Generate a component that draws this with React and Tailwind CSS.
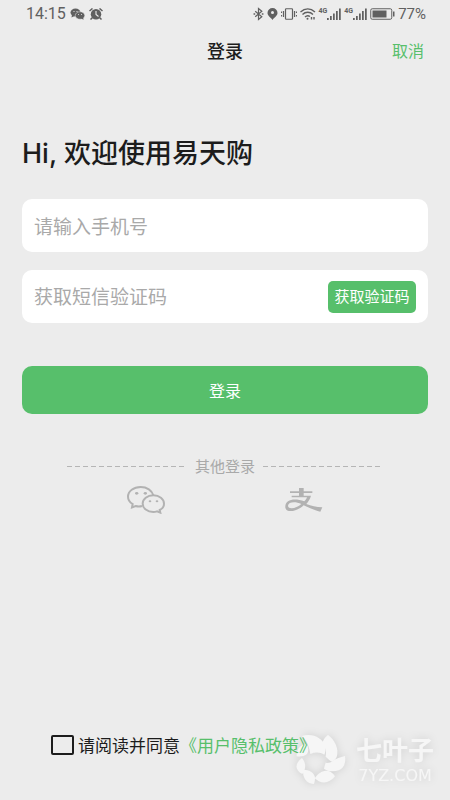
import React, { useState } from 'react';

const WechatSolid = () => (
  <svg className="h-3 w-[15px]" viewBox="0 0 30 24" aria-hidden="true">
    <g fill="#606060">
      <ellipse cx="11" cy="9" rx="10" ry="8" />
      <path d="M4 13l-1 6 6-3z" />
      <ellipse cx="20" cy="15" rx="9.5" ry="7.5" stroke="#ececec" strokeWidth="1" />
      <path d="M22 20l5 4-1-6z" />
    </g>
    <g fill="#ececec">
      <circle cx="8" cy="7" r="1.2" />
      <circle cx="14" cy="7" r="1.2" />
      <circle cx="17" cy="13" r="1" />
      <circle cx="23" cy="13" r="1" />
    </g>
  </svg>
);

const AlarmIcon = () => (
  <svg className="h-3 w-3.5" viewBox="0 0 28 24" fill="none" aria-hidden="true">
    <circle cx="14" cy="12.5" r="10.5" fill="#606060" />
    <path d="M1 6l6-5M27 6l-6-5M7 19l-4 4M21 19l4 4" stroke="#606060" strokeWidth="3" />
    <path d="M14 6v7l5 4" stroke="#ececec" strokeWidth="2.2" />
  </svg>
);

const BluetoothIcon = () => (
  <svg className="h-3.5 w-[11px]" viewBox="0 0 20 24" fill="none" stroke="#606060" strokeWidth="2.2" aria-hidden="true">
    <path d="M4 7l12 10-6 5V2l6 5L4 17" />
    <path d="M1 12h3M16 12h3" strokeWidth="2.5" />
  </svg>
);

const PinIcon = () => (
  <svg className="h-3 w-[11px]" viewBox="0 0 20 24" aria-hidden="true">
    <path d="M10 0a10 10 0 0 0-10 10c0 6 7 9 10 14 3-5 10-8 10-14A10 10 0 0 0 10 0z" fill="#606060" />
    <circle cx="10" cy="9" r="3" fill="#ececec" />
  </svg>
);

const VibrateIcon = () => (
  <svg className="h-3 w-4" viewBox="0 0 32 24" fill="none" stroke="#606060" strokeWidth="2.4" aria-hidden="true">
    <rect x="9" y="1.5" width="14" height="21" rx="1.5" />
    <path d="M5 6v12M27 6v12" />
    <path d="M1 7v3M1 14v3M31 7v3M31 14v3" />
  </svg>
);

const WifiIcon = () => (
  <svg className="h-3 w-4" viewBox="0 0 32 24" fill="none" stroke="#606060" strokeWidth="2.8" aria-hidden="true">
    <path d="M1 8c9-8 20-8 29 0M5 13c6-6 15-6 21 0M10 18c3-3 7-3 10-1" />
    <circle cx="15" cy="21.5" r="2" fill="#606060" stroke="none" />
    <path d="M23 18v5M28 18v5" />
  </svg>
);

const SignalIcon = () => (
  <div className="flex items-center">
    <span className="self-start text-[7px] leading-[7px] font-bold">4G</span>
    <svg className="h-3 w-3.5" viewBox="0 0 28 24" fill="#606060" aria-hidden="true">
      <rect x="0" y="20" width="3.5" height="4" />
      <rect x="6" y="16" width="3.5" height="8" />
      <rect x="12" y="11" width="3.5" height="13" />
      <rect x="18" y="6" width="3.5" height="18" />
      <rect x="24" y="1" width="3.5" height="23" />
    </svg>
  </div>
);

const BatteryIcon = () => (
  <svg className="h-3 w-[25px]" viewBox="0 0 50 24" aria-hidden="true">
    <rect x="1.5" y="1.5" width="42" height="21" rx="3" fill="none" stroke="#606060" strokeWidth="2" />
    <rect x="5" y="5" width="28" height="14" fill="#606060" />
    <rect x="46" y="7" width="3" height="10" fill="#606060" />
  </svg>
);

const StatusBar = () => (
  <div className="flex h-7 items-center justify-between pr-6 pl-[26px] font-['Roboto',sans-serif] text-base leading-none text-[#606060]">
    <div className="flex items-center gap-1">
      <span>14:15</span>
      <WechatSolid />
      <AlarmIcon />
    </div>
    <div className="flex items-center gap-[3px]">
      <BluetoothIcon />
      <PinIcon />
      <VibrateIcon />
      <WifiIcon />
      <SignalIcon />
      <SignalIcon />
      <BatteryIcon />
      <span className="text-[15px]">77%</span>
    </div>
  </div>
);

const WechatIcon = () => (
  <svg className="h-7 w-[38px]" viewBox="0 0 114 84" fill="none" stroke="#b2b2b2" strokeWidth="6" aria-hidden="true">
    <path d="M45 60c-6 2-13 2-19 0l-11 4 2-10C7 48 3 40 3 32 3 15 20 3 41 3c19 0 34 10 38 25" />
    <path d="M98 72c8-4 13-11 13-19 0-14-14-25-32-25S47 39 47 53s14 25 32 25c4 0 8-1 11-2l10 4z" />
    <g fill="#b2b2b2" stroke="none">
      <ellipse cx="29" cy="22" rx="5" ry="4" />
      <ellipse cx="55" cy="22" rx="5" ry="4" />
      <ellipse cx="69" cy="46" rx="4" ry="3" />
      <ellipse cx="90" cy="46" rx="4" ry="3" />
    </g>
  </svg>
);

const AlipayIcon = () => (
  <svg className="h-6 w-[38px]" viewBox="0 0 114 72" aria-hidden="true">
    <path d="M42 0h14v10h26v5H56v8h22c-3 10-8 18-14 25 14 5 30 9 48 10l-6 13c-18-4-34-12-50-19-16 16-51 26-55 7C-1 34 28 29 58 40c4-4 7-8 8-12H20v-5h22v-8H15v-5h27zM49 48C32 40 10 41 9 53c0 12 26 9 40-5z" fill="#b2b2b2" />
  </svg>
);

const Watermark = () => (
  <div className="pointer-events-none absolute right-4 bottom-3 flex items-center gap-2 text-[#f6f6f6] drop-shadow-[0_0_4px_rgba(0,0,0,0.12)]">
    <svg className="h-[54px] w-[54px]" viewBox="0 0 162 162" fill="currentColor" aria-hidden="true">
      <path d="M24 6c30-10 62 4 70 32 1 10 0 18-3 24-12-8-28-8-42-2C46 38 38 18 24 6z" />
      <path d="M102 3c20 14 34 42 26 66-4 8-9 12-14 14-6-2-12-9-19-15 3-15-2-30-10-40 2-10 8-18 17-25z" />
      <path d="M153 66c4 28-8 46-38 46-10 0-19-3-25-8 2-10 4-14 5-18 8 2 14 0 20-4 12-10 24-12 38-16z" />
      <path d="M62 133c10-15 22-23 37-23 10 1 18 8 24 17-18 22-40 25-61 6z" />
      <path d="M27 107c20 0 34 9 36 24 0 8-1 14-4 19-22-3-33-17-32-43z" />
      <path d="M24 72c12 14 13 32 1 48C2 108 2 88 24 72z" />
      <path d="M8 67c-1-18 8-34 28-38 8 10 9 22 2 32-8 6-19 8-30 6z" />
    </svg>
    <div className="flex flex-col items-center">
      <span className="font-['Liberation_Sans','Noto_Sans_CJK_SC',sans-serif] text-[26px] leading-[30px] font-bold">七叶子</span>
      <span className="font-['DejaVu_Sans',sans-serif] text-base leading-5">7YZ.COM</span>
    </div>
  </div>
);

const DashLine = () => (
  <span className="h-px flex-1 bg-[repeating-linear-gradient(90deg,#b5b5b5_0_5px,transparent_5px_8px)]" />
);

const App = () => {
  const [phone, setPhone] = useState('');
  const [code, setCode] = useState('');
  const [agreed, setAgreed] = useState(false);

  return (
    <div className="relative flex min-h-screen flex-col bg-[#ececec] font-['Noto_Sans_CJK_SC',sans-serif] text-[#1c1c1c]">
      <StatusBar />

      <header className="grid h-11 grid-cols-3 items-center px-[26px]">
        <h1 className="col-start-2 text-center text-lg font-medium">登录</h1>
        <button type="button" className="justify-self-end text-base text-[#57bf6b]">取消</button>
      </header>

      <form className="flex flex-col px-[22px] pt-[62px]" onSubmit={(e) => e.preventDefault()}>
        <h2 className="font-['Inter','Noto_Sans_CJK_SC',sans-serif] text-[27px] leading-10 font-medium">Hi, 欢迎使用易天购</h2>

        <div className="mt-[25px] flex flex-col gap-[18px]">
          <input
            type="tel"
            aria-label="手机号"
            placeholder="请输入手机号"
            value={phone}
            onChange={(e) => setPhone(e.target.value)}
            className="h-[53px] w-full rounded-[10px] bg-white px-3 text-[19px] outline-none placeholder:text-[#a9a9a9]"
          />
          <div className="flex h-[53px] items-center rounded-[10px] bg-white px-3">
            <input
              type="text"
              aria-label="短信验证码"
              placeholder="获取短信验证码"
              value={code}
              onChange={(e) => setCode(e.target.value)}
              className="min-w-0 flex-1 bg-transparent text-[19px] outline-none placeholder:text-[#a9a9a9]"
            />
            <button type="button" className="h-8 w-[88px] shrink-0 rounded-[5px] bg-[#57bf6b] text-[15px] text-white">
              获取验证码
            </button>
          </div>
        </div>

        <button type="submit" className="mt-[43px] h-12 rounded-[10px] bg-[#57bf6b] text-base text-white">
          登录
        </button>
      </form>

      <section className="mt-10 px-[67px]">
        <div className="flex items-center gap-2 text-[15px] leading-6 text-[#a9a9a9]">
          <DashLine />
          <span>其他登录</span>
          <DashLine />
        </div>
        <div className="mt-2 grid grid-cols-2 items-center justify-items-center">
          <button type="button" aria-label="微信登录"><WechatIcon /></button>
          <button type="button" aria-label="支付宝登录"><AlipayIcon /></button>
        </div>
      </section>

      <footer className="relative z-10 mt-auto flex items-center px-[51px] pb-[43px] text-[17px] leading-6">
        <label className="flex items-center gap-1">
          <input
            type="checkbox"
            checked={agreed}
            onChange={(e) => setAgreed(e.target.checked)}
            className="h-5 w-[23px] appearance-none rounded-xs border-2 border-[#1c1c1c] checked:bg-[#57bf6b]"
          />
          请阅读并同意
        </label>
        <a href="#privacy" className="text-[#57bf6b]">《用户隐私政策》</a>
      </footer>

      <Watermark />
    </div>
  );
};

export default App;
